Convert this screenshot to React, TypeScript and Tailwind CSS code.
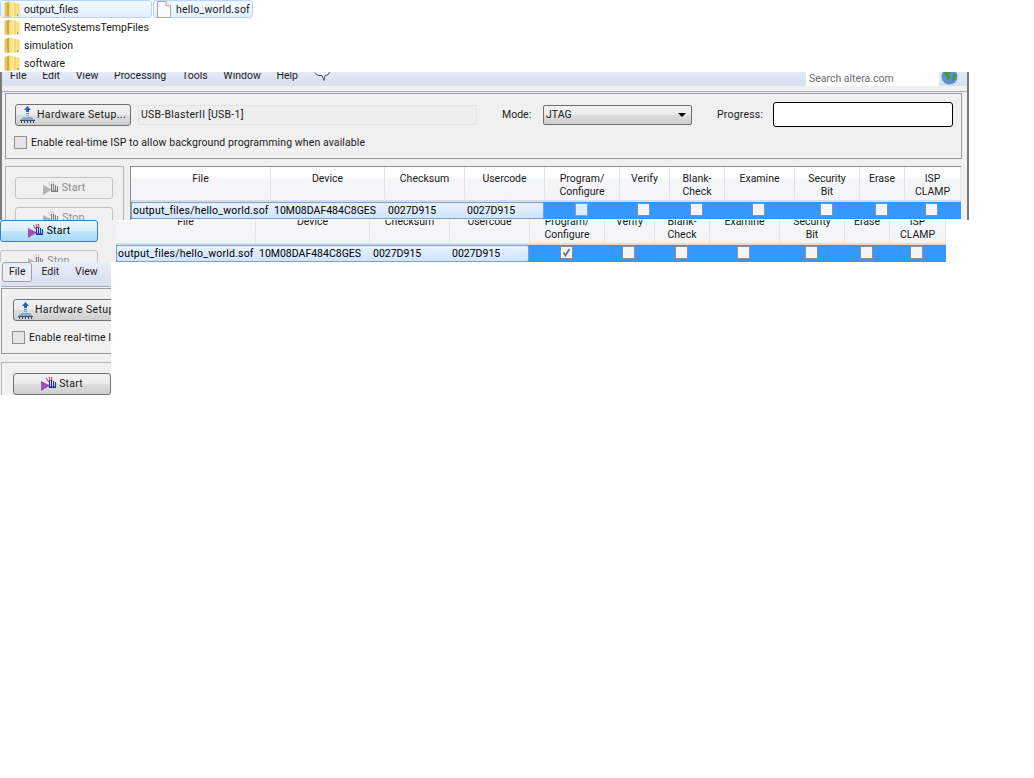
import type { ReactNode } from 'react';

const columns = [
  { title: ['File'], width: 'w-[140px]' },
  { title: ['Device'], width: 'w-[114px]' },
  { title: ['Checksum'], width: 'w-[80px]' },
  { title: ['Usercode'], width: 'w-[80px]' },
  { title: ['Program/', 'Configure'], width: 'w-[75px]' },
  { title: ['Verify'], width: 'w-[50px]' },
  { title: ['Blank-', 'Check'], width: 'w-[55px]' },
  { title: ['Examine'], width: 'w-[70px]' },
  { title: ['Security', 'Bit'], width: 'w-[65px]' },
  { title: ['Erase'], width: 'w-[45px]' },
  { title: ['ISP', 'CLAMP'], width: 'w-[56px]' },
];

const folders = ['RemoteSystemsTempFiles', 'simulation', 'software'];

const buttonFace = 'bg-[linear-gradient(#f2f2f2_0%,#ebebeb_48%,#dddddd_52%,#cfcfcf_100%)]';

function FolderIcon() {
  return (
    <svg width="16" height="16" viewBox="0 0 16 16" className="shrink-0">
      <defs>
        <linearGradient id="folderFill" x1="0" y1="0" x2="1" y2="0">
          <stop offset="0" stopColor="#f3d873" />
          <stop offset="0.5" stopColor="#fff2a8" />
          <stop offset="1" stopColor="#f5d566" />
        </linearGradient>
      </defs>
      <path d="M0.5 2 L5 0.5 L7 2 L7 15.5 L0.5 15.5 Z" fill="#e6c65c" />
      <path d="M5 0.5 L11 1.5 L15.5 3 L15.5 15.5 L5 15.5 Z" fill="url(#folderFill)" />
      <path d="M5 1 L5 15.5 L3 15.5 L3 2 Z" fill="#cfa83f" />
      <path d="M11 2 L11 15.5" stroke="#e8c050" strokeWidth="1" />
      <rect x="13" y="13" width="1" height="2" fill="#6f9fd0" />
    </svg>
  );
}

function FileIcon() {
  return (
    <svg width="14" height="17" viewBox="0 0 14 17" className="shrink-0">
      <path d="M0.5 0.5 H9 L13.5 5 V16.5 H0.5 Z" fill="#fafafa" stroke="#a9a9a9" />
      <path d="M9 0.5 V5 H13.5" fill="#e6e6e6" stroke="#b5b5b5" />
    </svg>
  );
}

function ChipIcon() {
  return (
    <svg width="15" height="17" viewBox="0 0 15 17" className="shrink-0">
      <path d="M7.5 0 L11 4 H9 V6 H6 V4 H4 Z" fill="#2a5db0" />
      <rect x="6" y="7" width="3" height="1" fill="#4f80c8" />
      <rect x="6" y="9" width="3" height="1" fill="#7da6dc" />
      <path d="M3.5 11 H11.5 L15 14 H0 Z" fill="#8aa5d2" />
      <rect x="0" y="14" width="15" height="1" fill="#3a4f74" />
      <path d="M1.5 15 V17 M4.5 15 V17 M7.5 15 V17 M10.5 15 V17 M13.5 15 V17" stroke="#33405a" strokeWidth="1" />
    </svg>
  );
}

function StartIcon({ disabled }: { disabled?: boolean }) {
  const play = disabled ? '#b4b4b4' : '#a44bb8';
  const hand = disabled ? '#7f7f7f' : '#1c2f9e';
  const back = disabled ? '#c9c9c9' : '#e0304f';
  return (
    <svg width="16" height="14" viewBox="0 0 16 14" className="shrink-0">
      <path d="M0 4 L9 8.5 L0 14 Z" fill={play} />
      <path d="M5.5 1 L7.5 5 M8 0 L9.5 4 M10.5 0 L11 4" stroke={back} strokeWidth="1" />
      <path d="M8.5 3 V10 M10.5 3 V10 M12.5 4 V10 M14.5 5 V10" stroke={hand} strokeWidth="1.1" />
      <path d="M8 9.5 H15 V11 H8 Z" fill={hand} />
    </svg>
  );
}

function GlobeIcon() {
  return (
    <svg width="17" height="17" viewBox="0 0 18 18">
      <circle cx="9" cy="9" r="8.5" fill="#5f8fcf" />
      <path d="M5 2 L10 1 L11 4 L8 7 L10 10 L7 13 L5 8 L3 6 Z" fill="#3e9b3e" />
      <path d="M13 6 L16 7 L15 12 L12 14 L12 9 Z" fill="#3e9b3e" />
    </svg>
  );
}

function BubbleIcon() {
  return (
    <svg width="17" height="10" viewBox="0 0 17 10">
      <path d="M1 0.5 Q2 3.5 5 3.5 H8 L10 8.5 L11 3.5 Q15 3.5 15.5 0" fill="#f4f6fb" stroke="#44506a" strokeWidth="1" />
    </svg>
  );
}

function Checkbox({ checked, hot, gray }: { checked?: boolean; hot?: boolean; gray?: boolean }) {
  return (
    <span
      className={`flex h-[13px] w-[13px] shrink-0 items-center justify-center border ${
        hot ? 'border-[#7da2ce] bg-[#dcecfb]' : 'border-[#8e8f8f]'
      } ${gray ? 'bg-[#e6e6e6]' : hot ? '' : 'bg-[#f4f4f4]'} ${checked ? 'bg-[#d8d8d8]' : ''}`}
    >
      {checked && (
        <svg width="9" height="9" viewBox="0 0 9 9">
          <path d="M1.5 4.5 L3.5 7.5 L7.5 1" fill="none" stroke="#5a6a8a" strokeWidth="1.6" />
        </svg>
      )}
    </span>
  );
}

function FileTable({ checked, hotFirst }: { checked?: boolean; hotFirst?: boolean }) {
  return (
    <div className="w-[830px] bg-white">
      <div className="flex h-[35px] w-[830px] border-b-2 border-[#d9dde3] bg-[linear-gradient(#ffffff_0%,#ffffff_32%,#f5f6f8_36%,#f3f4f6_100%)]">
        {columns.map((col) => (
          <div
            key={col.title.join('')}
            className={`${col.width} shrink-0 border-r border-[#e3e5e8] pt-[5px] text-center leading-[13px] text-[#1b1b1b]`}
          >
            {col.title.map((line) => (
              <div key={line}>{line}</div>
            ))}
          </div>
        ))}
      </div>
      <div className="flex h-[17px] w-[830px] items-center bg-[#3399ff]">
        <div className="flex h-[17px] w-[413px] shrink-0 items-center rounded-[2px] border border-[#7da2ce] bg-[linear-gradient(#e8f2fe,#cfe4fb)] pt-[1px] text-black">
          <span className="w-[140px] shrink-0 pl-[1px] tracking-[0.2px] whitespace-nowrap">output_files/hello_world.sof</span>
          <span className="w-[113px] shrink-0 pl-[2px]">10M08DAF484C8GES</span>
          <span className="w-[80px] shrink-0 pl-[3px]">0027D915</span>
          <span className="w-[78px] shrink-0 pl-[2px]">0027D915</span>
        </div>
        {columns.slice(4).map((col, i) => (
          <div key={col.title.join('')} className={`${col.width} flex shrink-0 justify-center pr-[1px] pb-[2px]`}>
            <Checkbox checked={checked && i === 0} hot={hotFirst && i === 0} />
          </div>
        ))}
      </div>
    </div>
  );
}

function ToolButton({ children, className }: { children: ReactNode; className: string }) {
  return (
    <div className={`flex shrink-0 items-center justify-center gap-[2px] rounded-[3px] border border-[#707070] ${buttonFace} ${className}`}>
      {children}
    </div>
  );
}

function DisabledButton({ label, className }: { label: string; className: string }) {
  return (
    <div className={`flex h-[22px] w-[98px] shrink-0 items-center justify-center gap-[3px] rounded-[3px] border border-[#c4c4c4] text-[#8c8c8c] ${className}`}>
      <StartIcon disabled />
      <span className="tracking-[0.2px]">{label}</span>
    </div>
  );
}

function Menu({ items, first }: { items: string[]; first?: boolean }) {
  return (
    <div className="flex h-[20px] w-full shrink-0 items-center bg-[linear-gradient(#e9eef8,#d8dff0)] text-[#1e1e1e]">
      {items.map((item, i) => (
        <span
          key={item}
          className={
            first && i === 0
              ? 'mr-[9px] flex h-[20px] items-center rounded-[3px] border border-[#a0a0a0] bg-[#e8edf6] px-[6px]'
              : 'mr-[15.7px]'
          }
        >
          {item}
        </span>
      ))}
    </div>
  );
}

export default function App() {
  return (
    <div className="relative h-[778px] w-[1034px] overflow-hidden bg-white font-['Roboto',sans-serif] text-[10.5px] text-[#1a1a1a]">
      {/* explorer strip */}
      <div className="absolute top-0 left-0 w-[255px]">
        <div className="flex h-[18px] items-center">
          <div className="flex h-[18px] w-[152px] items-center gap-[4px] rounded-[3px] border border-[#b8d6fb] bg-[linear-gradient(#f4f9ff,#e2eefd)] pl-[3px]">
            <FolderIcon />
            <span className="pt-[1px]">output_files</span>
          </div>
          <div className="ml-[1px] flex h-[18px] w-[100px] items-center gap-[5px] rounded-[3px] border border-[#b8d6fb] bg-[linear-gradient(#f4f9ff,#e2eefd)] pl-[3px]">
            <FileIcon />
            <span className="pt-[1px] tracking-[0.2px]">hello_world.sof</span>
          </div>
        </div>
        {folders.map((name) => (
          <div key={name} className="flex h-[18px] items-center gap-[4px] pl-[4px]">
            <FolderIcon />
            <span className="pt-[1px]">{name}</span>
          </div>
        ))}
      </div>

      {/* programmer window behind */}
      <div className="absolute top-[72px] left-0 flex h-[148px] w-[969px] flex-col overflow-hidden border-r-2 border-l-2 border-[#7a7a7a] bg-[#f0f0f0]">
        <div className="relative h-[20px] shrink-0 overflow-hidden border-b border-[#a5abb8]">
          <div className="-mt-[6px] bg-[linear-gradient(#e9eef8,#d8dff0)] pl-[8px]">
            <Menu items={['File', 'Edit', 'View', 'Processing', 'Tools', 'Window', 'Help']} />
          </div>
          <span className="absolute top-0 left-[312px]">
            <BubbleIcon />
          </span>
          <div className="absolute top-0 right-[28px] flex h-[14px] w-[133px] items-center bg-white pl-[3px] text-[#6d6d6d]">
            Search altera.com
          </div>
          <span className="absolute -top-[4px] right-[9px]">
            <GlobeIcon />
          </span>
        </div>
        <div className="mt-[1px] ml-[3px] flex h-[66px] w-[957px] shrink-0 flex-col border border-[#9a9a9a] pl-[9px]">
          <div className="mt-[8px] flex items-center">
            <ToolButton className="h-[22px] w-[116px]">
              <ChipIcon />
              <span className="tracking-[0.35px] whitespace-nowrap">Hardware Setup...</span>
            </ToolButton>
            <div className="ml-[7px] flex h-[20px] w-[339px] items-center border border-[#e3e3e3] bg-[#eeeeee] pl-[2px] tracking-[0.25px]">
              USB-BlasterII [USB-1]
            </div>
            <span className="ml-[25px] w-[41px]">Mode:</span>
            <div className={`flex h-[20px] w-[149px] items-center justify-between rounded-[2px] border border-[#707070] px-[2px] ${buttonFace}`}>
              <span>JTAG</span>
              <span className="mr-[3px] h-0 w-0 border-x-[4px] border-t-[4px] border-x-transparent border-t-black" />
            </div>
            <span className="ml-[25px] w-[56px] tracking-[0.2px]">Progress:</span>
            <div className="h-[25px] w-[180px] rounded-[3px] border border-black bg-white" />
          </div>
          <div className="mt-[8px] -ml-[1px] flex items-center gap-[4px]">
            <Checkbox gray />
            <span className="tracking-[0.1px]">Enable real-time ISP to allow background programming when available</span>
          </div>
        </div>
        <div className="mt-[7px] flex">
          <div className="ml-[3px] flex h-[70px] w-[119px] shrink-0 flex-col gap-[8px] border border-[#b4b4b4] pt-[10px] pl-[9px]">
            <DisabledButton label="Start" className="" />
            <DisabledButton label="Stop" className="" />
          </div>
          <div className="ml-[6px] h-[60px] border-t border-l border-[#8c8c8c]">
            <FileTable hotFirst />
          </div>
        </div>
      </div>

      {/* focused start + table copy */}
      <div className="absolute top-[220px] left-0 flex h-[42px] w-[946px] overflow-hidden bg-white">
        <div className="h-[42px] w-[116px] shrink-0 bg-[#f0f0f0]">
          <div className="flex h-[22px] w-[98px] items-center justify-center gap-[3px] rounded-[3px] border border-[#3c7fb1] bg-[linear-gradient(#e8f5fc_0%,#d9f0fc_48%,#bee6fd_52%,#a7d9f5_100%)] text-black">
            <StartIcon />
            <span className="tracking-[0.2px]">Start</span>
          </div>
          <DisabledButton label="Stop" className="mt-[8px]" />
        </div>
        <div className="-mt-[10px] shrink-0">
          <FileTable checked />
        </div>
      </div>

      {/* small window copy */}
      <div className="absolute top-[262px] left-0 flex h-[133px] w-[111px] flex-col overflow-hidden bg-[#f0f0f0] pl-[1px]">
        <div className="h-[25px] w-[200px] shrink-0 border-b border-[#a5abb8] bg-[linear-gradient(#e9eef8,#d8dff0)] pl-[1px]">
          <Menu first items={['File', 'Edit', 'View']} />
        </div>
        <div className="mt-[1px] h-[66px] w-[200px] shrink-0 border border-[#9a9a9a] pl-[11px]">
          <div className="mt-[10px] flex">
            <ToolButton className="h-[22px] w-[116px]">
              <ChipIcon />
              <span className="tracking-[0.35px] whitespace-nowrap">Hardware Setup...</span>
            </ToolButton>
          </div>
          <div className="mt-[9px] -ml-[1px] flex items-center gap-[4px]">
            <Checkbox gray />
            <span className="tracking-[0.1px] whitespace-nowrap">Enable real-time ISP</span>
          </div>
        </div>
        <div className="mt-[8px] h-[50px] w-[200px] shrink-0 border border-[#b4b4b4] pt-[10px] pl-[11px]">
          <ToolButton className="h-[22px] w-[98px]">
            <StartIcon />
            <span className="tracking-[0.2px]">Start</span>
          </ToolButton>
        </div>
      </div>
    </div>
  );
}
